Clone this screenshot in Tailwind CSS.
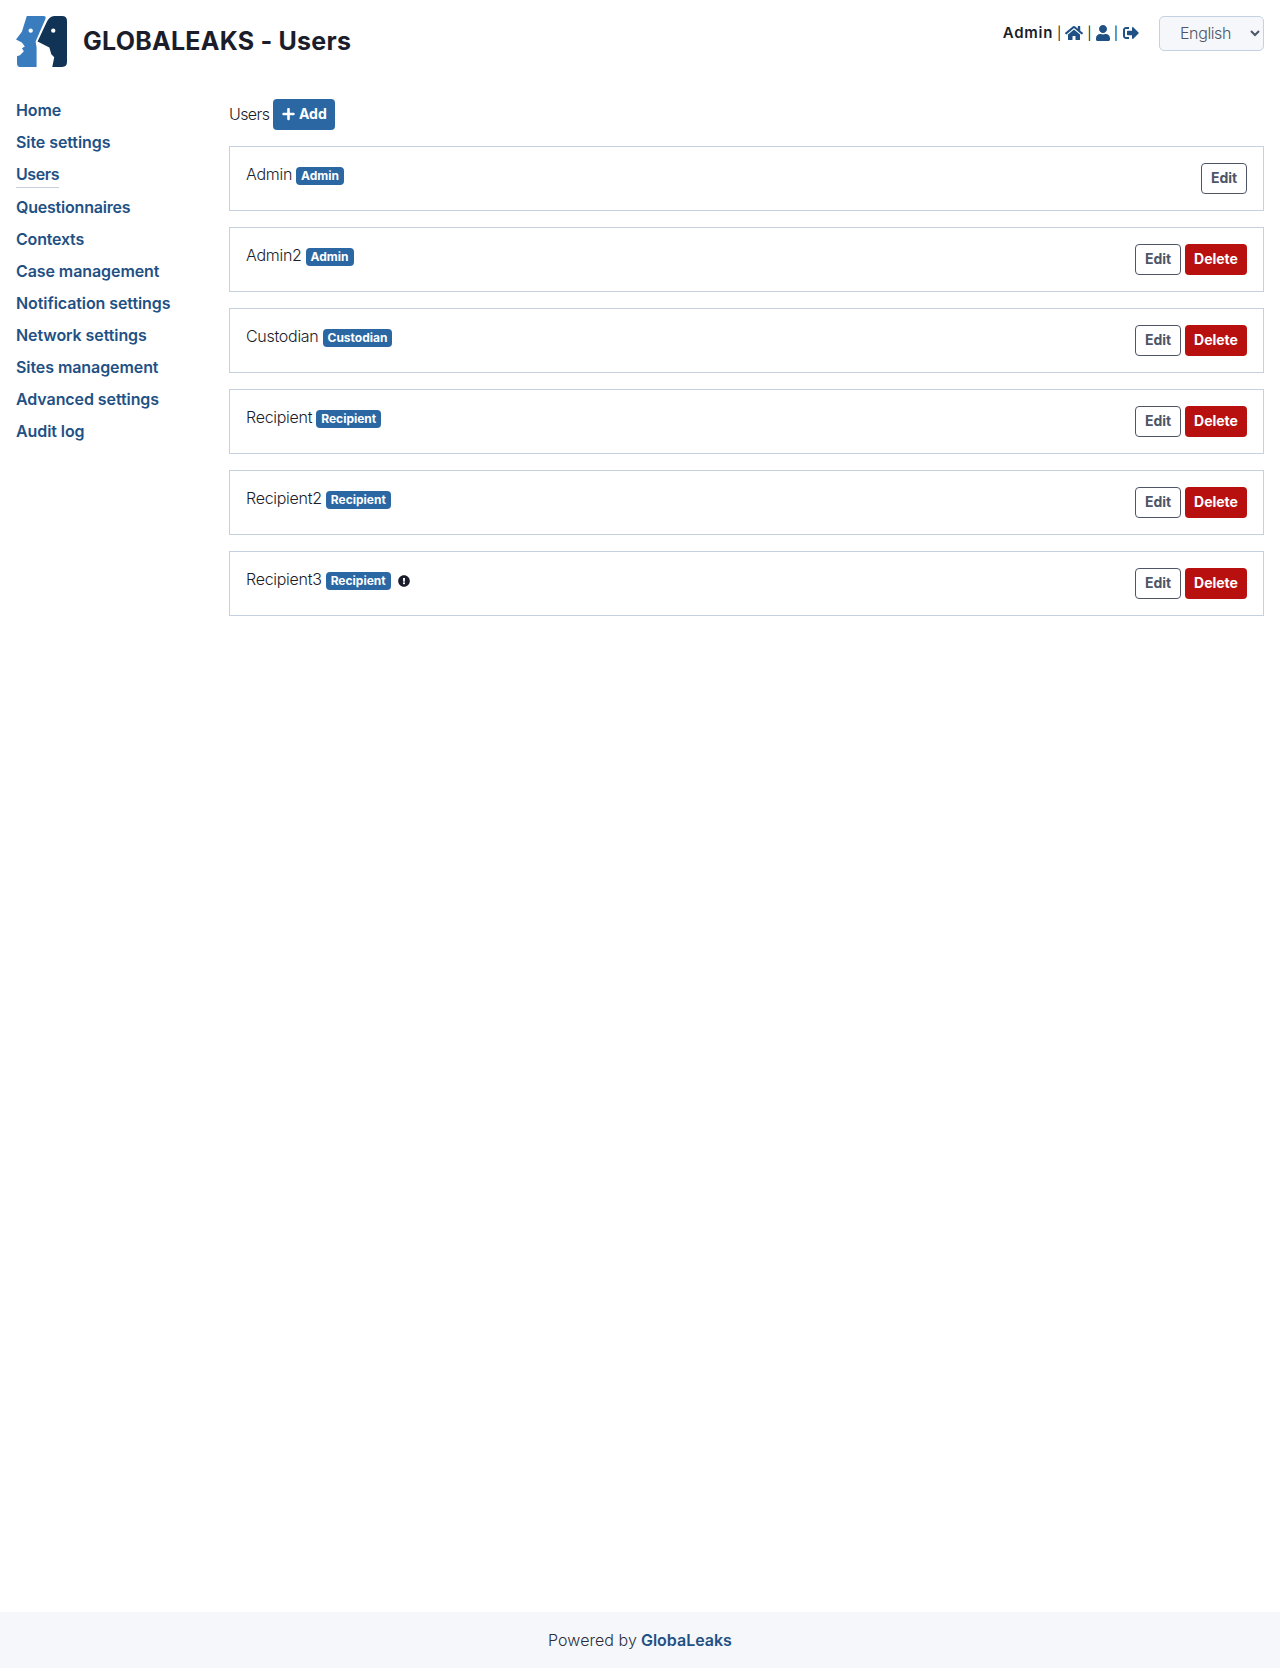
<!doctype html>
<html lang="en">
<head>
<meta charset="utf-8">
<title>GLOBALEAKS - Users</title>
<script src="https://cdn.jsdelivr.net/npm/@tailwindcss/browser@4"></script>
</head>
<body class="bg-white text-[#1b1d2b] font-['Inter',sans-serif] text-[16px] font-light tracking-[-0.28px]">
<div class="flex flex-col h-[1668px]">
  <header class="flex justify-between items-start h-[83px] pl-[16px] pr-[16px] pt-[16px]">
    <div class="flex items-center gap-[16px]">
      <svg class="w-[51px] h-[51px]" viewBox="0 0 52 52">
        <path fill="#3a7dbf" d="M11 0H28Q31 0 30 3L20 26 21 32V52H4Q1 52 1 48V41L4 40 8 36 6 33 9 31 6 27 0 24 6 16Z"/>
        <path fill="#113355" d="M39 0H47Q52 0 52 5V47Q52 52 47 52H37L39 42 36 39 34 32 22 26 31 7Q34 0 39 0Z"/>
        <circle cx="15" cy="15" r="2.2" fill="#fff"/><circle cx="38" cy="15" r="2.2" fill="#fff"/>
      </svg>
      <h1 class="text-[25px] font-bold text-[#1b1d2b] tracking-[0.25px]">GLOBALEAKS - Users</h1>
    </div>
    <div class="flex items-start">
      <div class="flex items-center h-[33px] gap-[4px] mr-[20px] text-[15px] tracking-normal">
        <span class="font-semibold tracking-[0.7px] pt-[2px]">Admin</span><span class="text-[13px] font-normal pt-[2px]">|</span>
        <svg class="w-[18px] h-[16px] fill-[#1f5185]" viewBox="0 0 576 512"><path d="M280.37 148.26L96 300.11V464a16 16 0 0 0 16 16l112.06-.29a16 16 0 0 0 15.92-16V368a16 16 0 0 1 16-16h64a16 16 0 0 1 16 16v95.64a16 16 0 0 0 16 16.05L464 480a16 16 0 0 0 16-16V300L295.67 148.26a12.19 12.19 0 0 0-15.3 0zM571.6 251.47L488 182.56V44.05a12 12 0 0 0-12-12h-56a12 12 0 0 0-12 12v72.61L318.47 43a48 48 0 0 0-61 0L4.34 251.47a12 12 0 0 0-1.6 16.9l25.5 31A12 12 0 0 0 45.15 301l235.22-193.74a12.19 12.19 0 0 1 15.3 0L530.9 301a12 12 0 0 0 16.9-1.6l25.5-31a12 12 0 0 0-1.7-16.93z"/></svg>
        <span class="text-[13px] font-normal pt-[2px]">|</span>
        <svg class="w-[14px] h-[16px] fill-[#1f5185]" viewBox="0 0 448 512"><path d="M224 256c70.7 0 128-57.3 128-128S294.7 0 224 0 96 57.3 96 128s57.3 128 128 128zm89.6 32h-16.7c-22.2 10.2-46.9 16-72.9 16s-50.6-5.8-72.9-16h-16.7C60.2 288 0 348.2 0 422.4V464c0 26.5 21.5 48 48 48h352c26.5 0 48-21.5 48-48v-41.6c0-74.2-60.2-134.4-134.4-134.4z"/></svg>
        <span class="text-[13px] font-normal pt-[2px] mr-[1px]">|</span>
        <svg class="w-[16px] h-[16px] fill-[#1f5185]" viewBox="0 0 512 512"><path d="M497 273L329 441c-15 15-41 4.5-41-17v-96H152c-13.3 0-24-10.7-24-24v-96c0-13.3 10.7-24 24-24h136V88c0-21.4 25.9-32 41-17l168 168c9.3 9.4 9.3 24.6 0 34zM192 436v-40c0-6.6-5.4-12-12-12H96c-17.7 0-32-14.3-32-32V160c0-17.7 14.3-32 32-32h84c6.6 0 12-5.4 12-12V76c0-6.6-5.4-12-12-12H96c-53 0-96 43-96 96v192c0 53 43 96 96 96h84c6.6 0 12-5.4 12-12z"/></svg>
      </div>
      <select class="w-[105px] h-[35px] pl-[16px] pr-[2px] pb-[2px] bg-[#f5f7fb] border border-[#c5d0e0] rounded-[5px] text-[#4d5566] text-[16px] font-light tracking-[-0.4px]"><option>English</option></select>
    </div>
  </header>
  <div class="flex flex-1 px-[16px]">
    <nav class="w-[213px] shrink-0 pt-[12px] font-semibold text-[#1f5185] text-[16px] tracking-[-0.08px]">
      <ul class="flex flex-col items-start">
        <li class="h-[32px] leading-[30px]">Home</li>
        <li class="h-[32px] leading-[30px]">Site settings</li>
        <li class="h-[33px]"><span class="block h-[29px] leading-[30px] border-b border-[#c5d0e0] tracking-[-0.4px]">Users</span></li>
        <li class="h-[32px] leading-[30px] tracking-[-0.2px]">Questionnaires</li>
        <li class="h-[32px] leading-[30px] tracking-[-0.2px]">Contexts</li>
        <li class="h-[32px] leading-[30px]">Case management</li>
        <li class="h-[32px] leading-[30px]">Notification settings</li>
        <li class="h-[32px] leading-[30px]">Network settings</li>
        <li class="h-[32px] leading-[30px]">Sites management</li>
        <li class="h-[32px] leading-[30px]">Advanced settings</li>
        <li class="h-[32px] leading-[30px]">Audit log</li>
      </ul>
    </nav>
    <main class="flex-1 pt-[16px]">
      <div class="flex items-center gap-[4px] h-[31px] mb-[16px]">
        <span class="pb-[1px] tracking-[-0.6px]">Users</span>
        <button class="flex items-center gap-[4px] h-[31px] w-[62px] justify-center bg-[#2a67a3] rounded-[4px] text-white font-bold text-[14px] tracking-normal pb-[2px]">
          <svg class="w-[13px] h-[14px] fill-white" viewBox="0 0 448 512"><path d="M416 208H272V64c0-17.67-14.33-32-32-32h-32c-17.67 0-32 14.33-32 32v144H32c-17.67 0-32 14.33-32 32v32c0 17.67 14.33 32 32 32h144v144c0 17.67 14.33 32 32 32h32c17.67 0 32-14.33 32-32V304h144c17.67 0 32-14.33 32-32v-32c0-17.67-14.33-32-32-32z"/></svg>Add</button>
      </div>
      <div class="flex flex-col gap-[16px]">
        <div class="flex justify-between h-[65px] border border-[#c5d0e0] px-[16px] pt-[15px]">
          <div class="flex items-center gap-[4px] h-[24px]"><span>Admin</span><span class="h-[18px] mt-[4px] px-[5px] leading-[18px] bg-[#2a67a3] rounded-[4px] text-white text-[12px] font-bold tracking-normal">Admin</span></div>
          <div class="flex gap-[4px] mt-[1px]"><button class="w-[46px] h-[31px] pb-[2px] border border-[#4d5566] rounded-[4px] text-[#4d5566] font-bold text-[14px] tracking-normal">Edit</button></div>
        </div>
        <div class="flex justify-between h-[65px] border border-[#c5d0e0] px-[16px] pt-[15px]">
          <div class="flex items-center gap-[4px] h-[24px]"><span>Admin2</span><span class="h-[18px] mt-[4px] px-[5px] leading-[18px] bg-[#2a67a3] rounded-[4px] text-white text-[12px] font-bold tracking-normal">Admin</span></div>
          <div class="flex gap-[4px] mt-[1px]"><button class="w-[46px] h-[31px] pb-[2px] border border-[#4d5566] rounded-[4px] text-[#4d5566] font-bold text-[14px] tracking-normal">Edit</button><button class="w-[62px] h-[31px] pb-[2px] bg-[#b80f0f] rounded-[4px] text-white font-bold text-[14px] tracking-normal">Delete</button></div>
        </div>
        <div class="flex justify-between h-[65px] border border-[#c5d0e0] px-[16px] pt-[15px]">
          <div class="flex items-center gap-[4px] h-[24px]"><span>Custodian</span><span class="h-[18px] mt-[4px] px-[5px] leading-[18px] bg-[#2a67a3] rounded-[4px] text-white text-[12px] font-bold tracking-normal">Custodian</span></div>
          <div class="flex gap-[4px] mt-[1px]"><button class="w-[46px] h-[31px] pb-[2px] border border-[#4d5566] rounded-[4px] text-[#4d5566] font-bold text-[14px] tracking-normal">Edit</button><button class="w-[62px] h-[31px] pb-[2px] bg-[#b80f0f] rounded-[4px] text-white font-bold text-[14px] tracking-normal">Delete</button></div>
        </div>
        <div class="flex justify-between h-[65px] border border-[#c5d0e0] px-[16px] pt-[15px]">
          <div class="flex items-center gap-[4px] h-[24px]"><span>Recipient</span><span class="h-[18px] mt-[4px] px-[5px] leading-[18px] bg-[#2a67a3] rounded-[4px] text-white text-[12px] font-bold tracking-normal">Recipient</span></div>
          <div class="flex gap-[4px] mt-[1px]"><button class="w-[46px] h-[31px] pb-[2px] border border-[#4d5566] rounded-[4px] text-[#4d5566] font-bold text-[14px] tracking-normal">Edit</button><button class="w-[62px] h-[31px] pb-[2px] bg-[#b80f0f] rounded-[4px] text-white font-bold text-[14px] tracking-normal">Delete</button></div>
        </div>
        <div class="flex justify-between h-[65px] border border-[#c5d0e0] px-[16px] pt-[15px]">
          <div class="flex items-center gap-[4px] h-[24px]"><span>Recipient2</span><span class="h-[18px] mt-[4px] px-[5px] leading-[18px] bg-[#2a67a3] rounded-[4px] text-white text-[12px] font-bold tracking-normal">Recipient</span></div>
          <div class="flex gap-[4px] mt-[1px]"><button class="w-[46px] h-[31px] pb-[2px] border border-[#4d5566] rounded-[4px] text-[#4d5566] font-bold text-[14px] tracking-normal">Edit</button><button class="w-[62px] h-[31px] pb-[2px] bg-[#b80f0f] rounded-[4px] text-white font-bold text-[14px] tracking-normal">Delete</button></div>
        </div>
        <div class="flex justify-between h-[65px] border border-[#c5d0e0] px-[16px] pt-[15px]">
          <div class="flex items-center gap-[4px] h-[24px]"><span>Recipient3</span><span class="h-[18px] mt-[4px] px-[5px] leading-[18px] bg-[#2a67a3] rounded-[4px] text-white text-[12px] font-bold tracking-normal">Recipient</span>
            <svg class="w-[12px] h-[12px] ml-[3px] mt-[4px] fill-[#1b1d2b]" viewBox="0 0 512 512"><path d="M504 256c0 136.997-111.043 248-248 248S8 392.997 8 256C8 119.083 119.043 8 256 8s248 111.083 248 248zm-248 50c-25.405 0-46 20.595-46 46s20.595 46 46 46 46-20.595 46-46-20.595-46-46-46zm-43.673-165.346l7.418 136c.347 6.364 5.609 11.346 11.982 11.346h48.546c6.373 0 11.635-4.982 11.982-11.346l7.418-136c.375-6.874-5.098-12.654-11.982-12.654h-63.383c-6.884 0-12.356 5.78-11.981 12.654z"/></svg></div>
          <div class="flex gap-[4px] mt-[1px]"><button class="w-[46px] h-[31px] pb-[2px] border border-[#4d5566] rounded-[4px] text-[#4d5566] font-bold text-[14px] tracking-normal">Edit</button><button class="w-[62px] h-[31px] pb-[2px] bg-[#b80f0f] rounded-[4px] text-white font-bold text-[14px] tracking-normal">Delete</button></div>
        </div>
      </div>
    </main>
  </div>
  <footer class="h-[56px] pb-[1px] bg-[#f5f7fb] flex items-center justify-center gap-[4px] text-[#2b2e3d]"><span class="tracking-[0.05px]">Powered by</span><span class="font-semibold text-[#1f5185] tracking-[0px]">GlobaLeaks</span></footer>
</div>
</body>
</html>
